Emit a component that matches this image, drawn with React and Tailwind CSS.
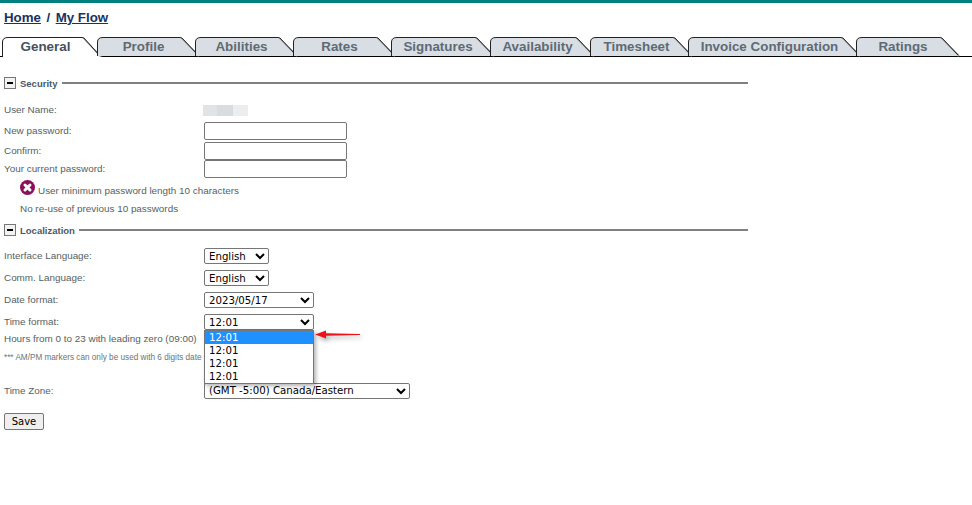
const tabs = [
  { label: "General", w: 100, active: true },
  { label: "Profile", w: 103 },
  { label: "Abilities", w: 103 },
  { label: "Rates", w: 103 },
  { label: "Signatures", w: 104 },
  { label: "Availability", w: 105 },
  { label: "Timesheet", w: 103 },
  { label: "Invoice Configuration", w: 173 },
  { label: "Ratings", w: 104 },
];

function Tab({ label, w, active }) {
  const b = active ? 20 : 19;
  const left = `M0.5 ${b} L0.5 5 Q0.5 0.5 6 0.5 L${w - 20} 0.5`;
  const top = `${left} L${w - 18} 1 L${w - 2} ${b - 1}`;
  const fill = `${left} L${w - 2} ${b} Z`;
  return (
    <div className="relative -mr-[5px] h-[19px] shrink-0 text-center" style={{ width: w }}>
      <svg className="absolute inset-0" width={w} height={20} fill="none">
        <path d={`M${w - 19} 1.5 L${w - 1} ${b}`} stroke="#999" strokeWidth="2" />
        <path d={fill} fill={active ? "#ffffff" : "#d8dee3"} />
        <path d={top} stroke="#222" strokeWidth="1" />
      </svg>
      <span className={`relative block text-[13.4px] leading-[20px] font-bold ${active ? "pr-[13px] text-[#44525e]" : "pr-[10px] text-[#5f6a74]"}`}>
        {label}
      </span>
    </div>
  );
}

function Section({ title }) {
  return (
    <div className="flex h-[12px] w-[748px] items-center pl-[4px]">
      <span className="flex h-[12px] w-[12px] shrink-0 items-center justify-center border border-[#777] bg-[#f2f2f2]">
        <span className="h-[2px] w-[6px] bg-black" />
      </span>
      <span className="ml-[4px] mr-[4px] pt-[1px] text-[9.5px] leading-[12px] font-bold text-[#4a5a68]">{title}</span>
      <span className="h-[2px] flex-1 bg-[#808080]" />
    </div>
  );
}

function Row({ label, h, children }) {
  return (
    <div className="flex items-center pl-[4px]" style={{ height: h }}>
      <span className="w-[200px] shrink-0 pt-[1px] text-[#555f63]">{label}</span>
      {children}
    </div>
  );
}

const selectClass =
  "box-border h-[16px] rounded-[2px] border border-[#767676] bg-white text-[10.2px] leading-[14px] text-black";
const inputClass = "box-border h-[18px] w-[143px] rounded-[2px] border border-[#767676] bg-white";

function Select({ w, value }) {
  return (
    <select className={selectClass} style={{ width: w, fontFamily: '"DejaVu Sans", sans-serif' }} defaultValue={value}>
      <option>{value}</option>
    </select>
  );
}

export default function App() {
  return (
    <div className="relative h-[505px] w-[972px] overflow-hidden bg-white font-['Liberation_Sans',Arial,sans-serif] text-[9.9px]">
      <div className="h-[3px] bg-[#008080]" />
      <div className="flex h-[34px] items-center gap-[5.5px] pb-[5px] pl-[4px] text-[13.3px] leading-[16px] font-bold text-[#17335f]">
        <a className="underline">Home</a>
        <span>/</span>
        <a className="underline">My Flow</a>
      </div>
      <div className="flex h-[20px] items-start border-b border-black pl-[2px]">
        {tabs.map((t) => (
          <Tab key={t.label} {...t} />
        ))}
      </div>

      <div className="pt-[20px]">
        <Section title="Security" />
        <div className="pt-[14px]">
          <Row label="User Name:" h={14}>
            <span className="-ml-[1px] h-[11px] w-[45px] bg-[linear-gradient(90deg,#e1e4e4_0%,#e1e4e4_30%,#d8dee0_30%,#d8dee0_66%,#eceeee_66%)]" />
          </Row>
          <div className="h-[5px]" />
          <Row label="New password:" h={18}><input className={inputClass} type="password" /></Row>
          <div className="h-[2px]" />
          <Row label="Confirm:" h={18}><input className={inputClass} type="password" /></Row>
          <Row label="Your current password:" h={18}><input className={inputClass} type="password" /></Row>
          <div className="flex h-[25px] items-center pl-[20px] pt-[1px]">
            <svg className="mb-[8px]" width="15" height="15" viewBox="0 0 15 15">
              <circle cx="7.5" cy="7.5" r="7.5" fill="#8c0f5a" />
              <path d="M5 5 L10 10 M10 5 L5 10" stroke="#fff" strokeWidth="3" strokeLinecap="round" />
            </svg>
            <span className="ml-[3px] text-[#555f63]">User minimum password length 10 characters</span>
          </div>
          <div className="flex h-[12px] items-center pl-[20px] text-[#555f63]">No re-use of previous 10 passwords</div>
        </div>
      </div>

      <div className="pt-[9px]">
        <Section title="Localization" />
        <div className="pt-[9px]">
          <Row label="Interface Language:" h={22}><Select w={65} value="English" /></Row>
          <Row label="Comm. Language:" h={22}><Select w={65} value="English" /></Row>
          <Row label="Date format:" h={22}><Select w={110} value="2023/05/17" /></Row>
          <Row label="Time format:" h={22}>
            <div className="relative flex">
              <Select w={110} value="12:01" />
              <div className="absolute left-0 top-[16px] z-10 w-[110px] border border-[#767676] bg-white font-['DejaVu_Sans',sans-serif] text-[10.2px] leading-[13px] text-black shadow-[2px_2px_4px_rgba(0,0,0,0.3)]">
                <div className="bg-[#1e90ff] pl-[4px] text-white">12:01</div>
                <div className="pl-[4px]">12:01</div>
                <div className="pl-[4px]">12:01</div>
                <div className="pl-[4px]">12:01</div>
              </div>
              <svg className="absolute left-[111px] top-[15px] z-20 overflow-visible drop-shadow-[2px_3px_2px_rgba(0,0,0,0.3)]" width="46" height="12" viewBox="0 0 46 12" fill="none">
                <path d="M0 5.5 L11 1.5 L11 4.2 L45 5 L45 6 L11 6.8 L11 9.5 Z" fill="#f01018" />
              </svg>
            </div>
          </Row>
          <div className="flex h-[12px] items-center pl-[4px] text-[#555f63]">Hours from 0 to 23 with leading zero (09:00)</div>
          <div className="flex h-[26px] items-center pl-[4px] text-[8.2px] text-[#6a7478]">*** AM/PM markers can only be used with 6 digits date</div>
          <div className="h-[12px]" />
          <Row label="Time Zone:" h={15}><Select w={206} value="(GMT -5:00) Canada/Eastern" /></Row>
          <div className="pl-[4px] pt-[15px]">
            <button className="box-border h-[17px] w-[40px] rounded-[2px] border border-[#767676] bg-[#efefef] font-['DejaVu_Sans',sans-serif] text-[10px] leading-[14px] text-black">Save</button>
          </div>
        </div>
      </div>
    </div>
  );
}
